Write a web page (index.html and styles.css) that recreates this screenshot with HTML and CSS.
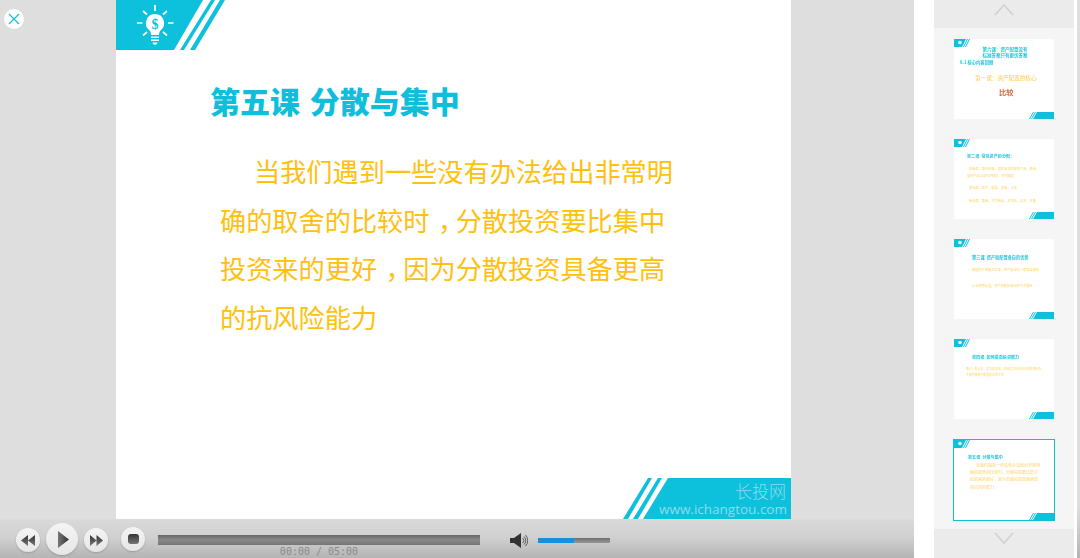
FILE: index.html
```html
<!DOCTYPE html>
<html lang="zh">
<head>
<meta charset="utf-8">
<title>第五课 分散与集中</title>
<link rel="stylesheet" href="styles.css">
</head>
<body>
<div class="player">
  <div class="main">
    <div class="stage">
      <button class="close" aria-label="关闭">
        <svg width="12" height="12" viewBox="0 0 12 12"><path d="M1 1l10 10M11 1L1 11" stroke="#10bfdc" stroke-width="1.1" fill="none"/></svg>
      </button>
      <div class="slide">
        <svg class="slide-head" width="110" height="50" viewBox="0 0 110 50">
          <path d="M0 0H87L58 50H0Z" fill="#0dc0dc"/>
          <path d="M95 0H99L68 50H64Z M104 0H109L79 50H74Z" fill="#0dc0dc"/>
          <g stroke="#fff" stroke-width="1.700" fill="none">
            <path d="M39 5V11M21 23H26.500M52 23H57.500M27 11L31 14.500M51 11L47 14.500M27 35.500L31 32M51 35.500L47 32"/>
          </g>
          <path d="M39 14a9.200 9.200 0 0 0-5.500 16.500c1 1 1.500 2.500 1.500 4.500h8c0-2 .5-3.500 1.500-4.500A9.200 9.200 0 0 0 39 14Z" fill="#fff"/>
          <path d="M35 36.500h8v1.500h-8ZM35 39.500h8v1.500h-8ZM36.500 42.500h5l-1 2h-3Z" fill="#fff"/>
          <text x="39" y="29" class="dollar">$</text>
        </svg>
        <div class="slide-body">
          <h1 class="slide-title">第五课 分散与集中</h1>
          <div class="slide-text">
            <div class="text-line text-first">当我们遇到一些没有办法给出非常明</div>
            <div class="text-line">确的取舍的比较时<span class="comma">，</span>分散投资要比集中</div>
            <div class="text-line">投资来的更好<span class="comma">，</span>因为分散投资具备更高</div>
            <div class="text-line">的抗风险能力</div>
          </div>
        </div>
        <div class="slide-foot">
          <svg class="foot-art" width="168" height="41" viewBox="0 0 168 41">
            <path d="M25 0H29L5 41H0ZM35 0H39L15 41H10ZM45 0H168V41H20Z" fill="#0dc0dc"/>
          </svg>
          <span class="foot-brand">长投网</span>
          <span class="foot-url">www.ichangtou.com</span>
        </div>
      </div>
    </div>
    <div class="controls">
      <button class="btn btn-prev" aria-label="上一页">
        <svg width="14" height="11" viewBox="0 0 14 11"><path d="M7 0V11L0 5.500ZM14 0V11L7 5.500Z" fill="url(#iconfill)"/></svg>
      </button>
      <button class="btn btn-play" aria-label="播放">
        <svg width="11" height="17" viewBox="0 0 11 17"><path d="M0 0L11 8.500L0 17Z" fill="url(#iconfill2)"/></svg>
      </button>
      <button class="btn btn-next" aria-label="下一页">
        <svg width="13" height="11" viewBox="0 0 13 11"><path d="M0 0V11L6.500 5.500ZM6.500 0V11L13 5.500Z" fill="url(#iconfill)"/></svg>
      </button>
      <button class="btn btn-stop" aria-label="停止"><span class="stop-mark"></span></button>
      <div class="seek">
        <div class="seek-bar"></div>
        <div class="time">00:00 / 05:00</div>
      </div>
      <svg class="speaker" width="18" height="15" viewBox="0 0 18 15">
        <path d="M0 5H4L11 0V15L4 10H0Z" fill="#333"/>
        <path d="M12.500 5a3 3 0 0 1 0 5M14 3.500a5.500 5.500 0 0 1 0 8M15.500 2a8 8 0 0 1 0 11" stroke="#444" stroke-width=".8" fill="none"/>
      </svg>
      <div class="volume"><div class="volume-level"></div></div>
      <svg class="defs" width="0" height="0">
        <defs>
          <linearGradient id="iconfill" x1="0" y1="0" x2="0" y2="1"><stop offset="0" stop-color="#333"/><stop offset="1" stop-color="#777"/></linearGradient>
          <linearGradient id="iconfill2" x1="0" y1="0" x2="1" y2="0"><stop offset="0" stop-color="#777"/><stop offset="1" stop-color="#333"/></linearGradient>
        </defs>
      </svg>
    </div>
  </div>

  <aside class="side">
    <div class="nav nav-up">
      <svg width="20" height="14" viewBox="0 0 20 14"><path d="M1 13L10 3L19 13" stroke="#d2d2d2" stroke-width="1.800" fill="none"/></svg>
    </div>
    <div class="thumbs">
      <div class="thumb">
        <svg class="thumb-head" width="16" height="8" viewBox="0 0 16 8"><path d="M0 0H12L8 8H0ZM13 0H14L10 8H9ZM15 0H16L12 8H11Z" fill="#0dc0dc"/><circle cx="6" cy="3.500" r="1.800" fill="#fff"/></svg>
        <div class="tb tb-1">
          <div class="t-head">第六课：资产配置没有<br>标准答案只有更优答案</div>
          <div class="t-sub">6.1 核心内容回顾</div>
          <div class="t-lead">第一课：资产配置的核心</div>
          <div class="t-red">比较</div>
        </div>
        <svg class="thumb-foot" width="25" height="7" viewBox="0 0 25 7"><path d="M4 0H5L1 7H0ZM6 0H7L3 7H2ZM8 0H25V7H4Z" fill="#0dc0dc"/></svg>
      </div>
      <div class="thumb">
        <svg class="thumb-head" width="16" height="8" viewBox="0 0 16 8"><path d="M0 0H12L8 8H0ZM13 0H14L10 8H9ZM15 0H16L12 8H11Z" fill="#0dc0dc"/><circle cx="6" cy="3.500" r="1.800" fill="#fff"/></svg>
        <div class="tb tb-2">
          <div class="t-title">第二课 常见资产的分配：</div>
          <div class="t-line t-first">现金类：银行存款、固定收益的理财产品、债券、</div>
          <div class="t-line t-out">国内产品以及P2P网贷、民间借贷</div>
          <div class="t-line t-gap">增长类：房产、股票、基金、土地</div>
          <div class="t-line t-gap">商品类：黄金、大宗商品、艺术品、红木、古董</div>
        </div>
        <svg class="thumb-foot" width="25" height="7" viewBox="0 0 25 7"><path d="M4 0H5L1 7H0ZM6 0H7L3 7H2ZM8 0H25V7H4Z" fill="#0dc0dc"/></svg>
      </div>
      <div class="thumb">
        <svg class="thumb-head" width="16" height="8" viewBox="0 0 16 8"><path d="M0 0H12L8 8H0ZM13 0H14L10 8H9ZM15 0H16L12 8H11Z" fill="#0dc0dc"/><circle cx="6" cy="3.500" r="1.800" fill="#fff"/></svg>
        <div class="tb tb-3">
          <div class="t-title">第三课 资产和配置各自的优势</div>
          <div class="t-line t-first3">保值资产保障大后备，资产收益率一般而且稳健</div>
          <div class="t-line t-gap3">让长期增长型，资产和股份波动并不大量级</div>
        </div>
        <svg class="thumb-foot" width="25" height="7" viewBox="0 0 25 7"><path d="M4 0H5L1 7H0ZM6 0H7L3 7H2ZM8 0H25V7H4Z" fill="#0dc0dc"/></svg>
      </div>
      <div class="thumb">
        <svg class="thumb-head" width="16" height="8" viewBox="0 0 16 8"><path d="M0 0H12L8 8H0ZM13 0H14L10 8H9ZM15 0H16L12 8H11Z" fill="#0dc0dc"/><circle cx="6" cy="3.500" r="1.800" fill="#fff"/></svg>
        <div class="tb tb-4">
          <div class="t-title">第四课 如何提高投资能力</div>
          <div class="t-line t-first3">通过一些分析、学习和总结，逐步建立适合自己的投资体系，</div>
          <div class="t-line t-tight">才能完成资产配置的长期工作</div>
        </div>
        <svg class="thumb-foot" width="25" height="7" viewBox="0 0 25 7"><path d="M4 0H5L1 7H0ZM6 0H7L3 7H2ZM8 0H25V7H4Z" fill="#0dc0dc"/></svg>
      </div>
      <div class="thumb thumb-active">
        <svg class="thumb-head" width="16" height="8" viewBox="0 0 16 8"><path d="M0 0H12L8 8H0ZM13 0H14L10 8H9ZM15 0H16L12 8H11Z" fill="#0dc0dc"/><circle cx="6" cy="3.500" r="1.800" fill="#fff"/></svg>
        <div class="tb tb-5">
          <div class="t-title">第五课 分散与集中</div>
          <p class="t-para">当我们遇到一些没有办法给出非常明确的取舍的比较时，分散投资要比集中投资来的更好，因为分散投资具备更高的抗风险能力</p>
        </div>
        <svg class="thumb-foot" width="25" height="7" viewBox="0 0 25 7"><path d="M4 0H5L1 7H0ZM6 0H7L3 7H2ZM8 0H25V7H4Z" fill="#0dc0dc"/></svg>
      </div>
    </div>
    <div class="nav nav-down">
      <svg width="20" height="14" viewBox="0 0 20 14"><path d="M1 1L10 11L19 1" stroke="#d2d2d2" stroke-width="1.800" fill="none"/></svg>
    </div>
  </aside>
  <div class="edge"></div>
</div>
</body>
</html>
```
FILE: styles.css
```css
* { box-sizing: border-box; }
html, body { margin: 0; height: 100%; overflow: hidden; background: #fff; }
body { font-family: "Noto Sans CJK SC", "Noto Sans", sans-serif; }

.player { display: flex; width: 1080px; height: 558px; }

.main { width: 914px; display: flex; flex-direction: column; flex: none; }
.stage { height: 519px; background: #dedede; padding-left: 116px; position: relative; }
.close {
  position: absolute; left: 4px; top: 9px; width: 20px; height: 20px; padding: 0;
  border: 0; border-radius: 50%; background: #fff;
  display: flex; align-items: center; justify-content: center;
}

.slide { width: 675px; height: 519px; background: #fff; display: flex; flex-direction: column; }
.slide-head { display: block; flex: none; }
.dollar { font-family: "Liberation Serif", serif; font-size: 14px; font-weight: 700; fill: #0dc0dc; text-anchor: middle; }
.slide-body { flex: 1; padding: 26px 0 0 94px; }
.slide-title {
  margin: 0; font-size: 30px; line-height: 48px; font-weight: 900; color: #10bedc;
  word-spacing: 3px; white-space: nowrap;
}
.slide-text {
  margin: 23px 0 0 10px; font-size: 26.200px; line-height: 48.700px;
  color: #ffc010; font-weight: 400;
}
.text-line { white-space: nowrap; }
.text-first { padding-left: 34px; }
.comma { padding-left: .32em; letter-spacing: -.32em; }
.slide-foot {
  align-self: flex-end; position: relative; width: 168px; height: 41px; flex: none;
  display: flex; flex-direction: column; align-items: flex-end; padding: 3px 4px 0 0;
  color: #8ddcec;
}
.foot-art { position: absolute; left: 0; top: 0; }
.foot-brand { position: relative; font-size: 17px; line-height: 20px; font-weight: 300; right: 1px; }
.foot-url { position: relative; font-family: "Open Sans", sans-serif; font-size: 13.500px; line-height: 16px; white-space: nowrap; }

.controls {
  height: 39px; display: flex; align-items: flex-start; padding-left: 16px; flex: none;
  background: linear-gradient(#dadada, #cfcfcf 50%, #b4b4b4);
}
.btn {
  padding: 0; border: 0; border-radius: 50%; flex: none;
  display: flex; align-items: center; justify-content: center;
  background: linear-gradient(#f4f4f4, #e6e6e6);
  box-shadow: 0 1px 2px rgba(0, 0, 0, .18);
}
.btn-prev, .btn-next { width: 24px; height: 24px; margin-top: 9px; }
.btn-play { width: 32px; height: 32px; margin: 4px 6px 0; padding-left: 2px; }
.btn-stop { width: 24px; height: 24px; margin: 8px 13px 0; }
.stop-mark { width: 11px; height: 10px; border-radius: 3px; background: linear-gradient(#333, #777); }

.seek { width: 322px; padding-top: 16px; flex: none; }
.seek-bar { height: 10px; background: linear-gradient(#666, #8a8a8a 50%, #747474); }
.time {
  font-family: "DejaVu Sans Mono", monospace; font-size: 10px; line-height: 13px;
  color: #8a8a8a; text-align: center; white-space: nowrap;
}
.speaker { margin: 14px 0 0 30px; flex: none; }
.volume { width: 72px; height: 5px; margin: 19px 0 0 10px; background: linear-gradient(#6e6e6e, #999); flex: none; }
.volume-level { width: 36px; height: 5px; background: #1590dc; }
.defs { position: absolute; }

.side { width: 140px; margin-left: 20px; background: #f5f5f5; display: flex; flex-direction: column; flex: none; }
.edge { width: 3px; margin-left: 3px; flex: none; background: linear-gradient(#dedede 91%, #b4b4b4); }
.nav { background: #ebebeb; display: flex; align-items: center; justify-content: center; flex: none; }
.nav-up { height: 28px; padding-bottom: 11px; }
.nav-down { height: 29px; padding-bottom: 10px; }
.thumbs { flex: 1; padding: 11px 20px 0; display: flex; flex-direction: column; gap: 20px; }
.thumb { width: 100px; height: 80px; background: #fff; display: flex; flex-direction: column; flex: none; overflow: hidden; }
.thumb-active { width: 102px; height: 82px; margin-left: -1px; border: 1px solid #10bedc; }
.thumb-head { display: block; flex: none; filter: blur(.3px); }
.thumb-foot { display: block; margin-left: auto; flex: none; filter: blur(.3px); }
.tb { flex: 1; min-height: 0; filter: blur(.45px); white-space: nowrap; }

.t-head { font-size: 4.500px; line-height: 5.500px; font-weight: 700; color: #1fc6e0; text-align: center; padding-left: 2px; }
.t-sub { font-size: 4.300px; line-height: 6px; font-weight: 700; color: #1fc6e0; margin: 1px 0 0 6px; }
.t-lead { font-size: 5.600px; line-height: 7px; color: #ffcb4a; margin: 9.500px 0 0 21px; }
.t-red { font-size: 7.200px; line-height: 9px; font-weight: 700; color: #cf6a45; margin: 6.500px 0 0 45px; }
.tb-1 { padding-top: 0; }

.t-title { font-size: 4.100px; line-height: 6px; font-weight: 700; color: #1fc6e0; word-spacing: 1.200px; }
.t-line { font-size: 3.200px; line-height: 5px; color: #ffd266; }
.tb-2 { padding: 6px 0 0 13px; }
.t-first { margin: 6.500px 0 0 2px; }
.t-out { margin-top: 2px; }
.t-gap { margin: 7.500px 0 0 2px; }
.tb-3 { padding: 7px 0 0 18px; }
.tb-3 .t-title { font-size: 4.200px; }
.t-first3 { margin-top: 6.500px; }
.t-gap3 { margin-top: 11px; }
.tb-4 { padding: 7px 0 0 18px; }
.tb-4 .t-line { margin-left: -6px; font-size: 2.900px; }
.t-tight { margin-top: 1px; }
.tb-5 { padding: 6px 0 0 14px; }
.t-para {
  margin: 1.500px 0 0 2px; width: 70px; white-space: normal; font-size: 4px; line-height: 7.400px;
  color: #ffd266; text-indent: 6px;
}
```
